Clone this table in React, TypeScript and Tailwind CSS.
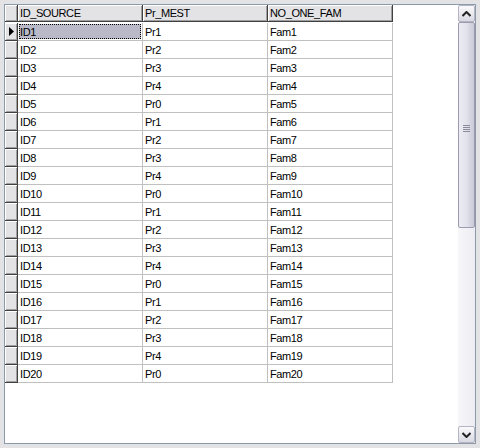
import React from "react";

const rows = Array.from({ length: 20 }, (_, i) => ({
  id: `ID${i + 1}`,
  pr: `Pr${(i + 1) % 5}`,
  fam: `Fam${i + 1}`,
}));

function Chevron({ up }: { up: boolean }) {
  return (
    <svg width="9" height="6" viewBox="0 0 9 6" className="block">
      {up ? (
        <path d="M0.5 5 L4.5 1 L8.5 5" fill="none" stroke="#222" strokeWidth="2" />
      ) : (
        <path d="M0.5 1 L4.5 5 L8.5 1" fill="none" stroke="#222" strokeWidth="2" />
      )}
    </svg>
  );
}

function ScrollButton({ up }: { up: boolean }) {
  return (
    <div className="h-[17px] w-[17px] rounded-[2px] border border-[#b4b4c4] bg-gradient-to-b from-[#fafafc] to-[#d9d9e3] flex items-center justify-center">
      <Chevron up={up} />
    </div>
  );
}

export default function App() {
  return (
    <div
      className="w-[480px] h-[448px] bg-[#e3e3e6] p-[4px]"
      style={{ fontFamily: "Tahoma, 'Liberation Sans', Arial, sans-serif" }}
    >
      <div className="w-full h-full border border-[#8d9aa9] bg-white flex">
        {/* table */}
        <div className="flex-1 flex flex-col text-[11px] tracking-[-0.4px] text-black leading-none">
          {/* header */}
          <div className="flex h-[17px]">
            <div className="w-[13px] h-[17px] bg-[#e3e3e6] border-r border-b border-[#404040] shadow-[inset_1px_1px_0_#fff,inset_-1px_-1px_0_#a0a0a0]" />
            {["ID_SOURCE", "Pr_MEST", "NO_ONE_FAM"].map((h) => (
              <div
                key={h}
                className="w-[125px] h-[17px] bg-[#e3e3e6] border-r border-b border-[#404040] shadow-[inset_1px_1px_0_#fff,inset_-1px_-1px_0_#a0a0a0] flex items-center pl-[2px] pt-[1px]"
              >
                {h}
              </div>
            ))}
          </div>
          {/* rows */}
          <div className="flex flex-col pt-[1px]">
            {rows.map((r, i) => (
              <div key={r.id} className="flex h-[18px]">
                <div className="w-[13px] h-[18px] bg-[#e3e3e6] border-r border-b border-[#404040] shadow-[inset_1px_1px_0_#fff,inset_-1px_-1px_0_#a0a0a0] flex items-center justify-center">
                  {i === 0 && (
                    <svg width="5" height="9" viewBox="0 0 5 9" className="block">
                      <path d="M0 0 L5 4.5 L0 9 Z" fill="#000" />
                    </svg>
                  )}
                </div>
                <div className="w-[125px] h-[18px] border-r border-b border-[#c0c0c0] p-[1px]">
                  {i === 0 ? (
                    <div className="w-full h-full bg-[#b9b9c7] border border-dotted border-black flex items-center pt-[1px]">
                      {r.id}
                    </div>
                  ) : (
                    <div className="w-full h-full flex items-center pl-[1px] pt-[1px]">{r.id}</div>
                  )}
                </div>
                <div className="w-[125px] h-[18px] border-r border-b border-[#c0c0c0] flex items-center pl-[2px] pt-[1px]">
                  {r.pr}
                </div>
                <div className="w-[125px] h-[18px] border-r border-b border-[#c0c0c0] flex items-center pl-[2px] pt-[1px]">
                  {r.fam}
                </div>
              </div>
            ))}
          </div>
        </div>
        {/* scrollbar */}
        <div className="w-[17px] h-full flex flex-col bg-[#f3f3f7]">
          <ScrollButton up={true} />
          <div className="flex-1 flex flex-col">
            <div className="h-[206px] rounded-[2px] border border-[#9c9cae] bg-gradient-to-r from-[#ececf3] via-[#e2e2ec] to-[#c9c9d8] flex items-center justify-center">
              <div className="flex flex-col gap-[1px] mb-[-6px]">
                <div className="w-[7px] h-[1px] bg-[#8b8b9c]" />
                <div className="w-[7px] h-[1px] bg-[#8b8b9c]" />
                <div className="w-[7px] h-[1px] bg-[#8b8b9c]" />
                <div className="w-[7px] h-[1px] bg-[#8b8b9c]" />
              </div>
            </div>
            <div className="flex-1 bg-gradient-to-r from-[#f7f7fa] to-[#ececf2]" />
          </div>
          <ScrollButton up={false} />
        </div>
      </div>
    </div>
  );
}
